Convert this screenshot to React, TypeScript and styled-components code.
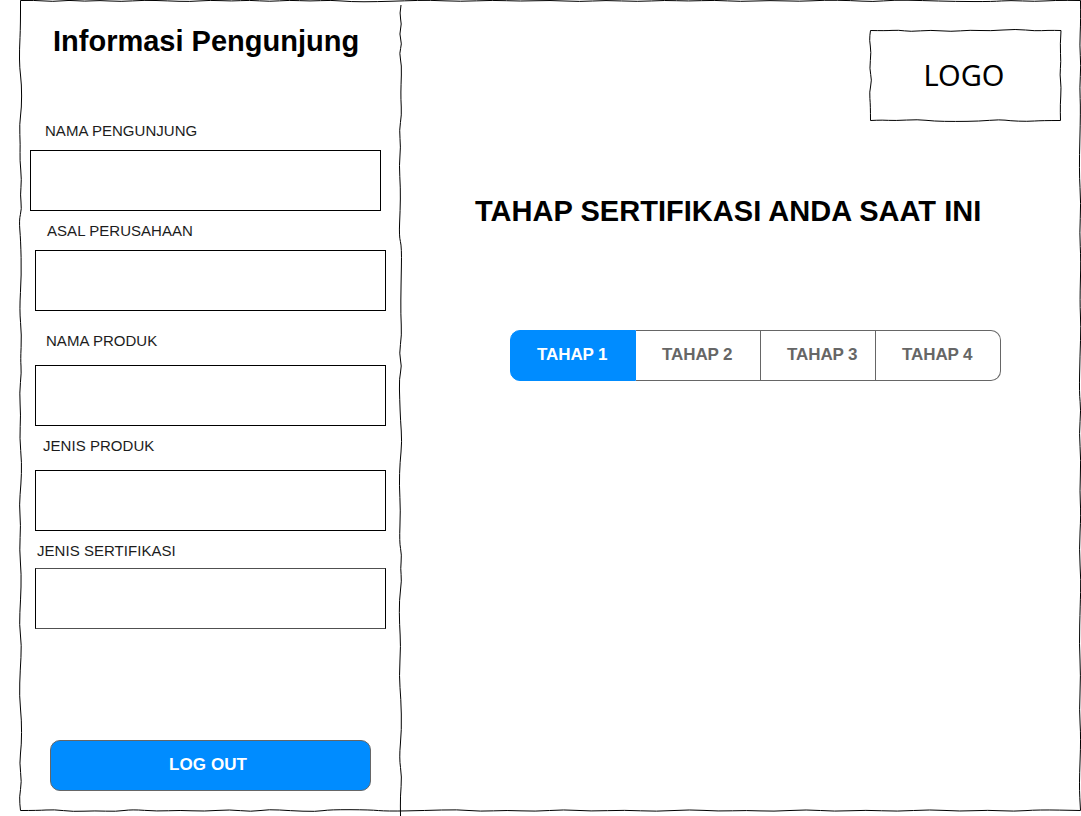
import React from "react";
import styled, { createGlobalStyle } from "styled-components";

const GlobalStyle = createGlobalStyle`
  * { box-sizing: border-box; }
  body { margin: 0; background: #fff; overflow: hidden; }
`;

const Screen = styled.div`
  position: relative;
  display: flex;
  width: 1081px;
  height: 816px;
  padding-left: 20px;
  overflow: hidden;
  color: #000;
  font-family: "Liberation Sans", Arial, sans-serif;
`;

const Outline = styled.svg`
  position: absolute;
  inset: 0;
  width: 1081px;
  height: 816px;
  pointer-events: none;
`;

const Sidebar = styled.aside`
  display: flex;
  flex-direction: column;
  width: 380px;
  padding: 24px 14px 0 10px;
`;

const Title = styled.h1`
  margin: 0 0 0 23px;
  font-size: 29px;
  line-height: 34px;
  font-weight: 700;
  white-space: nowrap;
`;

const Form = styled.form`
  display: flex;
  flex-direction: column;
  padding-top: 64px;
`;

const Field = styled.label<{ $indent: number; $gap: number; $left: number; $after: number }>`
  display: flex;
  flex-direction: column;
  gap: ${(p) => p.$gap}px;
  margin: 0 0 ${(p) => p.$after}px ${(p) => p.$left}px;

  span {
    padding-left: ${(p) => p.$indent}px;
    font-size: 15px;
    line-height: 18px;
    letter-spacing: 0.04px;
    color: #1c1c1c;
  }
`;

const Input = styled.input<{ $soft?: boolean }>`
  width: 351px;
  height: 61px;
  padding: 0 12px;
  border: 1px solid #000;
  border-top-color: ${(p) => (p.$soft ? "#505050" : "#000")};
  border-bottom-color: ${(p) => (p.$soft ? "#505050" : "#000")};
  border-radius: 0;
  background: #fff;
  font: inherit;
  outline: none;
`;

const LogoutButton = styled.button`
  width: 321px;
  height: 51px;
  margin: 111px 0 0 20px;
  padding: 0 5px 1px 0;
  border: 1px solid #666;
  border-radius: 10px;
  background: #008cff;
  color: #fff;
  font: 700 17px "Liberation Sans", Arial, sans-serif;
  letter-spacing: 0.1px;
`;

const Main = styled.main`
  display: flex;
  flex-direction: column;
  width: 681px;
  padding-top: 30px;
`;

const Logo = styled.div`
  display: flex;
  align-items: center;
  justify-content: center;
  align-self: flex-end;
  width: 191px;
  height: 91px;
  margin-right: 20px;
  padding: 0 3px 2px 0;
  font: 400 29px "Noto Sans", "Open Sans", sans-serif;
`;

const Heading = styled.h2`
  margin: 73px 0 0 75px;
  font-size: 29px;
  line-height: 34px;
  font-weight: 700;
  letter-spacing: 0.03px;
  white-space: nowrap;
`;

const Steps = styled.nav`
  display: flex;
  width: 491px;
  height: 51px;
  margin: 102px 0 0 110px;
`;

const Step = styled.button<{ $width: number; $active?: boolean }>`
  width: ${(p) => p.$width}px;
  padding: 0 0 1px 26px;
  border: 1px solid ${(p) => (p.$active ? "#008cff" : "#666")};
  border-left-width: ${(p) => (p.$active ? 1 : 0)}px;
  background: ${(p) => (p.$active ? "#008cff" : "#fff")};
  color: ${(p) => (p.$active ? "#fff" : "#666")};
  font: 700 17px "Liberation Sans", Arial, sans-serif;
  letter-spacing: -0.1px;
  text-align: left;
  white-space: nowrap;

  &:first-child { border-radius: 10px 0 0 10px; }
  &:last-child { border-radius: 0 10px 10px 0; }
`;

const fields = [
  { label: "NAMA PENGUNJUNG", indent: 15, gap: 10, left: 0, after: 11 },
  { label: "ASAL PERUSAHAAN", indent: 12, gap: 10, left: 5, after: 21 },
  { label: "NAMA PRODUK", indent: 11, gap: 15, left: 5, after: 11 },
  { label: "JENIS PRODUK", indent: 8, gap: 15, left: 5, after: 11 },
  { label: "JENIS SERTIFIKASI", indent: 2, gap: 8, left: 5, after: 0, soft: true },
];

const steps = [
  { label: "TAHAP 1", width: 126 },
  { label: "TAHAP 2", width: 125 },
  { label: "TAHAP 3", width: 115 },
  { label: "TAHAP 4", width: 125 },
];

type Point = [number, number];

// Curves through the midpoints so the pen stroke stays smooth between wobbles.
function stroke(points: Point[]) {
  let d = `M${points[0][0]} ${points[0][1]}`;
  for (let i = 1; i < points.length - 1; i++) {
    const [x, y] = points[i];
    const [nx, ny] = points[i + 1];
    d += ` Q${x} ${y} ${(x + nx) / 2} ${(y + ny) / 2}`;
  }
  const [ex, ey] = points[points.length - 1];
  return `${d} L${ex} ${ey}`;
}

const leftEdge: Point[] = [
  [20.5, 0.5], [20.6, 25], [19.4, 50], [19.6, 68], [21.6, 84], [21.6, 108], [19.4, 124], [20.3, 145],
  [19.8, 160], [21.7, 180], [20.2, 195], [21.8, 209], [19, 220], [20.7, 240], [21.5, 275], [19.4, 310],
  [21.7, 335], [20.5, 360], [21.5, 372], [19.4, 393], [20.8, 415], [19.6, 438], [21.8, 463], [21, 484],
  [19.2, 505], [20.8, 525], [19.4, 550], [21.4, 574], [20.6, 600], [19.2, 625], [21.7, 645], [20.2, 670],
  [19.3, 696], [21.6, 720], [21.5, 745], [19.4, 763], [21.8, 782], [19.2, 797], [20.5, 810.5],
];

const topEdge: Point[] = [
  [20.5, 0.5], [35, 0.2], [53, 1.7], [69, 0.1], [85, 1.4], [99, 0.3], [121, 1.7], [144, 0.1],
  [168, 0.9], [190, 1.7], [210, 0.1], [232, 1.2], [249, 0.1], [270, 1.6], [289, 0.1], [310, 1.2],
  [331, 0.1], [351, 1.8], [377, 1.7], [405, 0.8], [430, 0.1], [460, 1.6], [493, 0.1], [520, 1.3],
  [550, 0.2], [580, 1.8], [605, 0.2], [638, 1.7], [665, 0.2], [688, 1.2], [715, 0.1], [740, 1.7],
  [770, 0.3], [800, 1.5], [824, 0.1], [851, 0.5], [873, 1.8], [894, 0], [922, 0.5], [955, 1.5],
  [993, 1.6], [1010, 0.3], [1035, 1.6], [1055, 0.3], [1080.5, 0.5],
];

const rightEdge: Point[] = [
  [1080.5, 0.5], [1080.8, 20], [1079.6, 46], [1081, 65], [1079.6, 88], [1080.7, 109], [1079, 171],
  [1081, 204], [1079.5, 233], [1081, 260], [1079.8, 302], [1081, 326], [1080, 355], [1079.2, 393],
  [1081, 410], [1079.1, 433], [1081, 460], [1079.7, 492], [1081, 514], [1079.1, 550], [1081, 580],
  [1080.2, 605], [1079.2, 645], [1080.8, 675], [1079.2, 711], [1081, 737], [1079.1, 785], [1080.5, 810.5],
];

const bottomEdge: Point[] = [
  [20.5, 810.5], [38, 810.5], [54, 809.5], [73, 811.7], [95, 810.7], [116, 811.6], [132, 809.4], [157, 811.3],
  [180, 810.2], [204, 811.4], [230, 809.5], [251, 811.8], [269, 809.3], [290, 810.7], [316, 811.7], [330, 809.6],
  [370, 809.8], [387, 811.3], [425, 810.5], [458, 809.5], [480, 811.5], [507, 810.2], [535, 811.5],
  [564, 809.5], [590, 811.3], [625, 810], [656, 811.6], [690, 809.5], [718, 811.3], [747, 810.3],
  [773, 811.5], [807, 809.5], [834, 811.5], [866, 810], [897, 811.5], [930, 809.5], [960, 811.4],
  [988, 810], [1014, 811.5], [1038, 809.7], [1080.5, 810.5],
];

const divider: Point[] = [
  [401, 5], [399.4, 14], [401.8, 24], [399.3, 34], [402, 44], [399.2, 53], [401.7, 65], [401, 85],
  [400.8, 99], [401.7, 115], [399.2, 130], [400.8, 147], [399.1, 165], [400.5, 188], [400.2, 210],
  [399, 236], [401.8, 247], [401, 285], [400.7, 315], [401.8, 335], [399.1, 354], [401.9, 366],
  [399.2, 378], [399.7, 400], [400.5, 420], [402, 442], [400, 462], [399.2, 485], [400.6, 510],
  [399.3, 542], [401.8, 555], [400.4, 569], [401.8, 580], [399.2, 600], [399.5, 625], [400.8, 645],
  [399.1, 677], [400.9, 698], [401.7, 730], [399.1, 758], [401.9, 777], [400.3, 796], [400.5, 816],
];

const logoBox: Point[][] = [
  [[870.5, 30.5], [885, 30.8], [899, 30], [910, 31.7], [931, 30], [951, 31.7], [970, 30], [990, 31], [1016, 29], [1035, 31], [1048, 30.3], [1061, 30.5]],
  [[1061, 30.5], [1060, 45], [1061, 62], [1059.8, 75], [1061.3, 87], [1060.2, 105], [1060.5, 120.5]],
  [[1060.5, 120.5], [1042, 120.5], [1027, 121.5], [1010, 120.8], [1000, 119.5], [979, 121.2], [955, 121.5], [934, 121.2], [918, 119.4], [895, 120.7], [882, 120], [870.5, 120.5]],
  [[870.5, 120.5], [870.5, 105], [869.3, 92], [872, 80], [869.4, 69], [871.3, 52], [869.3, 40], [870.5, 30.5]],
];

const strokes = [topEdge, rightEdge, bottomEdge, leftEdge, divider, ...logoBox];

export default function App() {
  return (
    <>
      <GlobalStyle />
      <Screen>
        <Sidebar>
          <Title>Informasi Pengunjung</Title>
          <Form onSubmit={(e) => e.preventDefault()}>
            {fields.map((f) => (
              <Field key={f.label} $indent={f.indent} $gap={f.gap} $left={f.left} $after={f.after}>
                <span>{f.label}</span>
                <Input $soft={f.soft} />
              </Field>
            ))}
            <LogoutButton type="button">LOG OUT</LogoutButton>
          </Form>
        </Sidebar>
        <Main>
          <Logo>LOGO</Logo>
          <Heading>TAHAP SERTIFIKASI ANDA SAAT INI</Heading>
          <Steps>
            {steps.map((s, i) => (
              <Step key={s.label} $width={s.width} $active={i === 0}>{s.label}</Step>
            ))}
          </Steps>
        </Main>
        <Outline viewBox="0 0 1081 816" fill="none" stroke="#000" strokeWidth={1} aria-hidden="true">
          {strokes.map((points, i) => (
            <path key={i} d={stroke(points)} />
          ))}
        </Outline>
      </Screen>
    </>
  );
}
